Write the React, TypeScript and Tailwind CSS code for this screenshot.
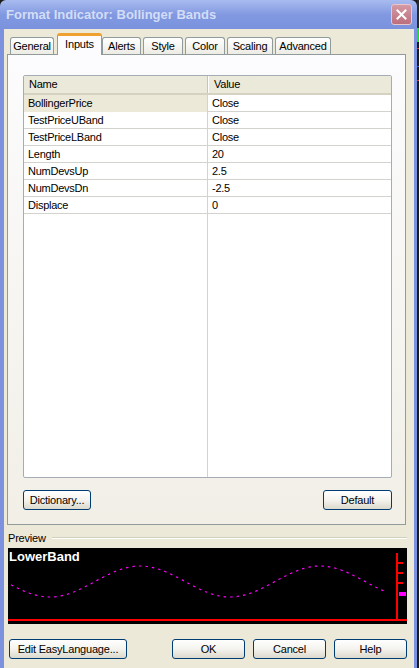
import clsx from "clsx";

const tabs = [
  { label: "General", cls: "w-[44px]" },
  { label: "Inputs", cls: "ml-[3px] w-[45px]", active: true },
  { label: "Alerts", cls: "w-[39px]" },
  { label: "Style", cls: "ml-[2px] w-[40px]" },
  { label: "Color", cls: "ml-[2px] w-[40px]" },
  { label: "Scaling", cls: "ml-[2px] w-[46px]" },
  { label: "Advanced", cls: "ml-[2px] w-[56px]" },
];

const inputs = [
  ["BollingerPrice", "Close"],
  ["TestPriceUBand", "Close"],
  ["TestPriceLBand", "Close"],
  ["Length", "20"],
  ["NumDevsUp", "2.5"],
  ["NumDevsDn", "-2.5"],
  ["Displace", "0"],
];

// dashed lower band across the preview strip
const wave = Array.from({ length: 188 }, (_, i) => {
  const x = 3 + i * 2;
  const y = 33.5 - 15.5 * Math.sin((2 * Math.PI * (x - 87)) / 180);
  return `${i ? "L" : "M"}${x} ${y.toFixed(1)}`;
}).join(" ");

const XpButton = ({ label, className }: { label: string; className: string }) => (
  <button
    type="button"
    className={clsx(
      "flex h-[20px] items-center justify-center rounded-[3px] border border-[#003c74] bg-gradient-to-b from-white via-[#f4f3ee] to-[#dcd9cc] text-[11px] tracking-[-0.2px] text-black",
      className
    )}
  >
    {label}
  </button>
);

const App = () => {
  return (
    <div className="flex h-[668px] w-[419px] overflow-hidden bg-[#1b1b1b] font-['Liberation_Sans',Arial,sans-serif]">
      <div className="flex w-[417px] flex-col">
        {/* title bar */}
        <div className="flex h-[29px] items-center justify-between rounded-t-[6px] bg-gradient-to-b from-[#a9bbef] via-[#8299e1] to-[#7a92dd] pl-[6px] pr-[5px]">
          <span className="text-[13px] font-bold text-[#d3ddf6]">
            Format Indicator: Bollinger Bands
          </span>
          <div className="flex h-[21px] w-[21px] items-center justify-center rounded-[3px] border border-[#e8c6cc] bg-gradient-to-b from-[#d49aa4] to-[#bb6f7e]">
            <svg width="11" height="11" viewBox="0 0 11 11">
              <path d="M1.5 1.5 9.5 9.5 M9.5 1.5 1.5 9.5" stroke="white" strokeWidth="2" strokeLinecap="square" />
            </svg>
          </div>
        </div>

        <div className="flex flex-1 flex-col border-l-[4px] border-r-[3px] border-[#7d92de] bg-[#ece9d8] pt-[4px]">
          {/* tab strip */}
          <div className="flex h-[21px] items-end pl-[6px]">
            {tabs.map((t) => (
              <div
                key={t.label}
                className={clsx(
                  "flex items-center justify-center rounded-t-[3px] border border-b-0 text-[11px] tracking-[-0.2px] text-black",
                  t.cls,
                  t.active
                    ? "relative z-10 -mb-px h-[22px] border-[#919b9c] border-t-[3px] border-t-[#f0a030] bg-[#fcfcfe] pb-[3px]"
                    : "h-[17px] border-[#919b9c] bg-gradient-to-b from-white to-[#ecebe4]"
                )}
              >
                {t.label}
              </div>
            ))}
          </div>

          {/* tab page */}
          <div className="ml-[3px] mr-[8px] flex flex-col border border-[#919b9c] bg-gradient-to-b from-[#fcfcfe] to-[#f1efe6] pb-[14px] pl-[15px] pr-[13px] pt-[20px]">
            <div className="flex h-[403px] flex-col overflow-hidden rounded-[2px] border border-[#a5acb5] bg-white text-[11px] tracking-[-0.25px] text-black">
              <div className="grid h-[19px] grid-cols-[184px_1fr] border-b-2 border-[#d6d2c2] bg-[#ebe9d9]">
                <div className="flex items-center border-r border-[#c7c4b1] pl-[5px]">Name</div>
                <div className="flex items-center border-l border-white pl-[5px]">Value</div>
              </div>
              {inputs.map(([name, value], i) => (
                <div key={name} className="grid h-[17px] grid-cols-[184px_1fr] border-b border-[#d4d2cc]">
                  <div
                    className={clsx(
                      "flex items-center border-r border-[#d4d2cc] pl-[4px]",
                      i === 0 && "bg-[#ece9d8]"
                    )}
                  >
                    {name}
                  </div>
                  <div className="flex items-center pl-[4px]">{value}</div>
                </div>
              ))}
              <div className="grid flex-1 grid-cols-[184px_1fr]">
                <div className="border-r border-[#d4d2cc]" />
                <div />
              </div>
            </div>

            <div className="mt-[12px] flex justify-between">
              <XpButton label="Dictionary..." className="w-[68px]" />
              <XpButton label="Default" className="w-[69px]" />
            </div>
          </div>

          {/* preview */}
          <div className="ml-[4px] mr-[7px] mt-[6px] flex h-[14px] items-center gap-[6px]">
            <span className="text-[11px] tracking-[-0.2px] text-black">Preview</span>
            <div className="h-[2px] flex-1 border-t border-b border-t-[#d0d0bf] border-b-white" />
          </div>
          <div className="ml-[4px] mr-[7px] mt-[3px] h-[76px] bg-black">
            <svg width="399" height="76" viewBox="0 0 399 76">
              <text x="1" y="13" fill="white" fontSize="13" fontWeight="bold" fontFamily="Liberation Sans, Arial, sans-serif">
                LowerBand
              </text>
              <path d={wave} fill="none" stroke="#ff00ff" strokeWidth="1.2" strokeDasharray="2.5 4" />
              <rect x="0" y="71" width="399" height="2" fill="#ff0000" />
              <rect x="388" y="5" width="2" height="68" fill="#ff0000" />
              <rect x="390" y="14" width="5" height="2" fill="#ff0000" />
              <rect x="390" y="24" width="5" height="2" fill="#ff0000" />
              <rect x="390" y="34" width="5" height="2" fill="#ff0000" />
              <rect x="391" y="44" width="7" height="4" fill="#ff00ff" />
            </svg>
          </div>

          {/* dialog buttons */}
          <div className="ml-[5px] mr-[7px] mt-[15px] flex">
            <XpButton label="Edit EasyLanguage..." className="w-[118px]" />
            <div className="ml-auto flex gap-[8px]">
              <XpButton label="OK" className="w-[73px]" />
              <XpButton label="Cancel" className="w-[73px]" />
              <XpButton label="Help" className="w-[73px]" />
            </div>
          </div>
        </div>
      </div>

      {/* sliver of the chart window behind */}
      <div className="flex w-[2px] flex-col">
        <div className="h-[28px] bg-[#2a2a2a]" />
        <div className="h-[14px] bg-[#22dd22]" />
        <div className="h-[6px]" />
        <div className="h-[1px] bg-[#ff2020]" />
        <div className="h-[17px]" />
        <div className="h-[1px] bg-[#3050ff]" />
        <div className="h-[13px]" />
        <div className="h-[1px] bg-[#ff2020]" />
      </div>
    </div>
  );
};

export default App;
